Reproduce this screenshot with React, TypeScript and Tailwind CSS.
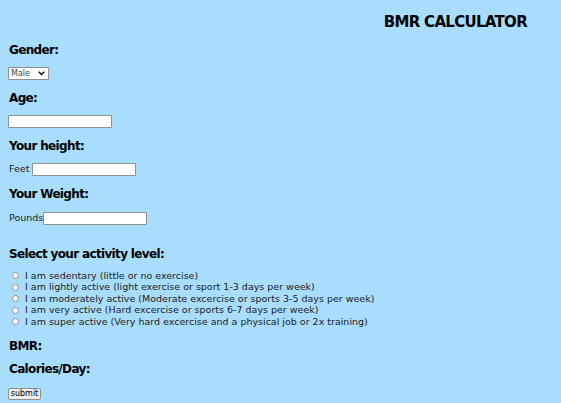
import { useState } from "react";

const activityLevels = [
  "I am sedentary (little or no exercise)",
  "I am lightly active (light exercise or sport 1-3 days per week)",
  "I am moderately active (Moderate excercise or sports 3-5 days per week)",
  "I am very active (Hard excercise or sports 6-7 days per week)",
  "I am super active (Very hard excercise and a physical job or 2x training)",
];

const Heading = ({ children, className = "" }: { children: React.ReactNode; className?: string }) => (
  <h2 className={`text-[12px] leading-[16px] font-bold tracking-[-0.65px] text-black ${className}`}>
    {children}
  </h2>
);

const TextBox = () => (
  <input
    type="text"
    className="block w-[104px] h-[13px] bg-white border border-[#8f8f8f] rounded-[1px] outline-none"
  />
);

export default function App() {
  const [activity, setActivity] = useState<number | null>(null);

  return (
    <div
      className="min-h-[403px] w-full bg-[#a8ddfd] pl-[9px] pt-[12px] text-black"
      style={{ fontFamily: '"DejaVu Sans", Verdana, sans-serif' }}
    >
      {/* Title */}
      <div className="flex justify-end pr-[34px]">
        <h1 className="text-[15px] leading-[20px] font-bold tracking-[-0.7px]">BMR CALCULATOR</h1>
      </div>

      <Heading className="mt-[10px]">Gender:</Heading>
      <div className="relative mt-[9px] w-[41px] h-[13px] -ml-[1px]">
        <select className="block appearance-none w-full h-full bg-white border border-[#8f8f8f] rounded-[1px] pl-[2px] text-[8px] leading-[11px] text-[#444] outline-none">
          <option>Male</option>
          <option>Female</option>
        </select>
        <svg
          className="pointer-events-none absolute right-[4px] top-[4px]"
          width="7"
          height="5"
          viewBox="0 0 7 5"
        >
          <path d="M0.8 0.8 L3.5 3.6 L6.2 0.8" fill="none" stroke="#000" strokeWidth="1.4" />
        </svg>
      </div>

      <Heading className="mt-[10px]">Age:</Heading>
      <div className="mt-[9px] -ml-[1px]">
        <TextBox />
      </div>

      <Heading className="mt-[10px]">Your height:</Heading>
      <div className="mt-[9px] flex items-center h-[13px] text-[9.5px] text-[#222]">
        <span className="mr-[3px]">Feet</span>
        <TextBox />
      </div>

      <Heading className="mt-[10px]">Your Weight:</Heading>
      <div className="mt-[10px] flex items-center h-[13px] text-[9.5px] text-[#222]">
        <span>Pounds</span>
        <TextBox />
      </div>

      <Heading className="mt-[21px]">Select your activity level:</Heading>
      <div className="mt-[8px] flex flex-col">
        {activityLevels.map((label, i) => (
          <label key={i} className="flex items-center h-[11.5px] text-[9.5px] text-[#222]">
            <input
              type="radio"
              name="activity"
              checked={activity === i}
              onChange={() => setActivity(i)}
              className="appearance-none ml-[3px] mr-[6px] w-[7px] h-[7px] rounded-full border border-[#8f8f8f] bg-white checked:bg-[#1a73e8]"
            />
            {label}
          </label>
        ))}
      </div>

      <Heading className="mt-[10px]">BMR:</Heading>
      <Heading className="mt-[7px]">Calories/Day:</Heading>

      <button
        type="button"
        className="block mt-[11px] -ml-[1px] w-[33px] h-[12px] bg-[#efefef] border border-[#8f8f8f] rounded-[2px] text-[8px] leading-[10px] text-black"
      >
        submit
      </button>
    </div>
  );
}
